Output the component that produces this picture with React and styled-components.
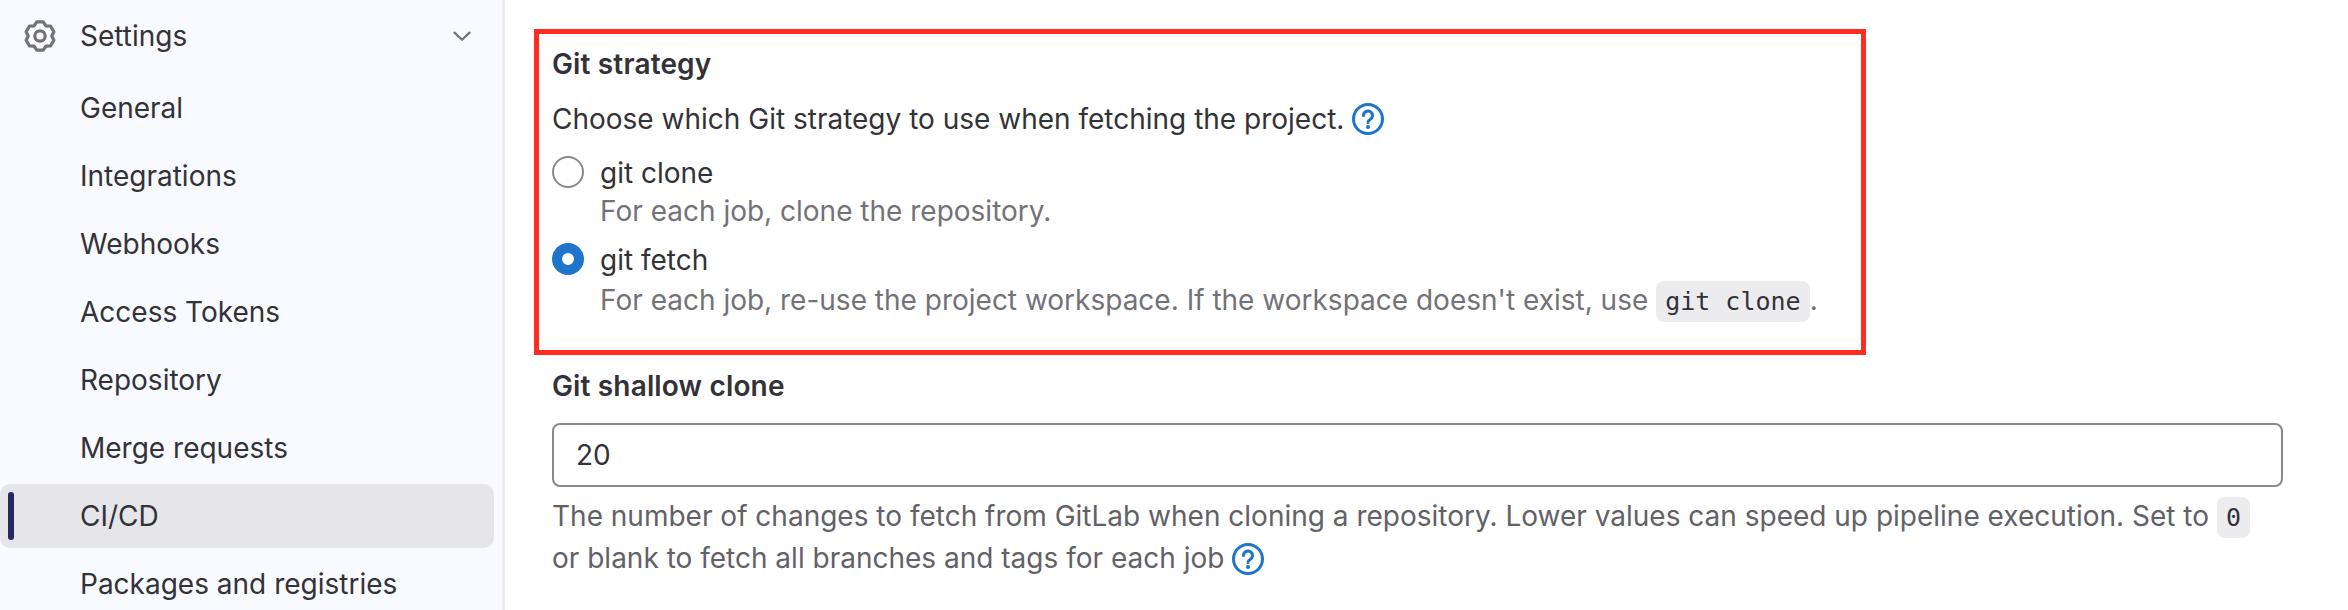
import React from "react";
import styled, { createGlobalStyle } from "styled-components";

const Global = createGlobalStyle`
  html, body { margin: 0; padding: 0; background: #fff; height: 100%; overflow: hidden; }
  body { font-family: Inter, "Noto Sans", sans-serif; color: #333238; }
`;
const Page = styled.div`display: flex; width: 2348px; height: 610px; overflow: hidden;`;
const Sidebar = styled.nav`
  width: 502px; flex: none; background: #f9faff;
  border-right: 3px solid #ececef; padding-top: 4px; display: flex; flex-direction: column; gap: 4px;
`;
const SubList = styled.div`display: flex; flex-direction: column; gap: 4px; margin-top: 4px;`;
const NavRow = styled.a`
  position: relative; flex: none; display: flex; align-items: center; height: 64px; width: 494px; box-sizing: border-box;
  padding-left: ${p => (p.$top ? "24px" : "80px")}; border-radius: 10px;
  font-size: 28px; color: #333238; background: ${p => (p.$active ? "#e6e6ea" : "transparent")};
`;
const ActiveBar = styled.span`
  position: absolute; left: 8px; top: 8px; bottom: 8px; width: 6px; border-radius: 3px; background: #292961;
`;
const GearIcon = styled.svg`width: 32px; height: 32px; margin-right: 24px; flex: none; color: #737278;`;
const Chevron = styled.svg`width: 24px; height: 24px; margin-left: auto; margin-right: 20px; color: #737278;`;
const Main = styled.main`flex: 1; padding: 29px 0 0 29px; min-width: 0;`;
const Highlight = styled.section`
  width: 1332px; height: 326px; box-sizing: border-box; border: 5px solid #ff2d20; padding: 9px 13px 0;
`;
const Title = styled.div`font-size: 28px; font-weight: 600; line-height: 42px; letter-spacing: 0.15px; color: #333238;`;
const Intro = styled.div`
  font-size: 28px; line-height: 42px; margin-top: 13px; display: flex; align-items: center; gap: 8px;
`;
const HelpIcon = styled.svg`width: 32px; height: 32px; flex: none; color: #1f75cb; vertical-align: -7px;`;
const RadioRow = styled.div`display: flex; gap: 16px; margin-top: ${p => p.$mt || 0}px;`;
const Radio = styled.span`
  width: 32px; height: 32px; box-sizing: border-box; border-radius: 50%; flex: none; margin-top: 4px;
  ${p => p.$on ? "border: 10px solid #1f75cb; background: #fff;" : "border: 2px solid #89888d; background: #fff;"}
`;
const RadioText = styled.div`display: flex; flex-direction: column;`;
const RadioLabel = styled.div`font-size: 28px; line-height: 42px;`;
const Hint = styled.div`font-size: 28px; line-height: 41px; color: #737278; margin-top: ${p => p.$mt}px;`;
const Code = styled.code`
  font-family: "DejaVu Sans Mono", monospace; font-size: 25px; color: #333238; background: #ececef;
  border-radius: 8px; padding: 6px 9px;
`;
const Shallow = styled.section`margin: 10px 0 0 18px; width: 1731px;`;
const Input = styled.div`
  height: 64px; box-sizing: border-box; border: 2px solid #89888d; border-radius: 8px; margin-top: 16px;
  display: flex; align-items: center; padding-left: 22px; font-size: 28px;
`;
const Help = styled.div`font-size: 28px; line-height: 41px; color: #626168; margin-top: 9px; max-width: 1712px;`;

const gearPath = (() => {
  const c = 8, out = 7.25, val = 5.9, half = 13, pts = [];
  for (let k = 0; k < 6; k++) {
    const a = -90 + k * 60;
    [[out, a - half], [out, a + half], [val, a + 30]].forEach(([r, d]) => {
      const t = (d * Math.PI) / 180;
      pts.push(`${(c + r * Math.cos(t)).toFixed(2)} ${(c + r * Math.sin(t)).toFixed(2)}`);
    });
  }
  return `M${pts.join("L")}Z`;
})();

const Gear = () => (
  <GearIcon viewBox="0 0 16 16" fill="none" stroke="currentColor" strokeWidth="1.6">
    <circle cx="8" cy="8" r="2.6" />
    <path strokeLinejoin="round" d={gearPath} />
  </GearIcon>
);
const Question = () => (
  <HelpIcon viewBox="0 0 16 16" fill="none" stroke="currentColor" strokeWidth="1.5">
    <circle cx="8" cy="8" r="7.25" />
    <path strokeLinecap="round" d="M5.75 6.25A2.25 2.25 0 1 1 9.2 8.15C8.5 8.6 8 9 8 9.75" />
    <circle cx="8" cy="12" r="1" fill="currentColor" stroke="none" />
  </HelpIcon>
);

const items = ["General", "Integrations", "Webhooks", "Access Tokens", "Repository", "Merge requests", "CI/CD", "Packages and registries"];

export default function App() {
  return (
    <Page>
      <Global />
      <Sidebar>
        <NavRow $top>
          <Gear />
          Settings
          <Chevron viewBox="0 0 16 16" fill="none" stroke="currentColor" strokeWidth="1.5" strokeLinecap="round" strokeLinejoin="round">
            <path d="M3 5.75 8 10.5l5-4.75" />
          </Chevron>
        </NavRow>
        <SubList>
          {items.map(t => (
            <NavRow key={t} $active={t === "CI/CD"}>
              {t === "CI/CD" && <ActiveBar />}
              {t}
            </NavRow>
          ))}
        </SubList>
      </Sidebar>
      <Main>
        <Highlight>
          <Title>Git strategy</Title>
          <Intro>Choose which Git strategy to use when fetching the project. <Question /></Intro>
          <RadioRow $mt={12}>
            <Radio />
            <RadioText>
              <RadioLabel>git clone</RadioLabel>
              <Hint $mt={-3}>For each job, clone the repository.</Hint>
            </RadioText>
          </RadioRow>
          <RadioRow $mt={7}>
            <Radio $on />
            <RadioText>
              <RadioLabel>git fetch</RadioLabel>
              <Hint $mt={-1}>For each job, re-use the project workspace. If the workspace doesn't exist, use <Code>git clone</Code>.</Hint>
            </RadioText>
          </RadioRow>
        </Highlight>
        <Shallow>
          <Title>Git shallow clone</Title>
          <Input>20</Input>
          <Help>The number of changes to fetch from GitLab when cloning a repository. Lower values can speed up pipeline execution. Set to <Code>0</Code> or blank to fetch all branches and tags for each job <Question /></Help>
        </Shallow>
      </Main>
    </Page>
  );
}
